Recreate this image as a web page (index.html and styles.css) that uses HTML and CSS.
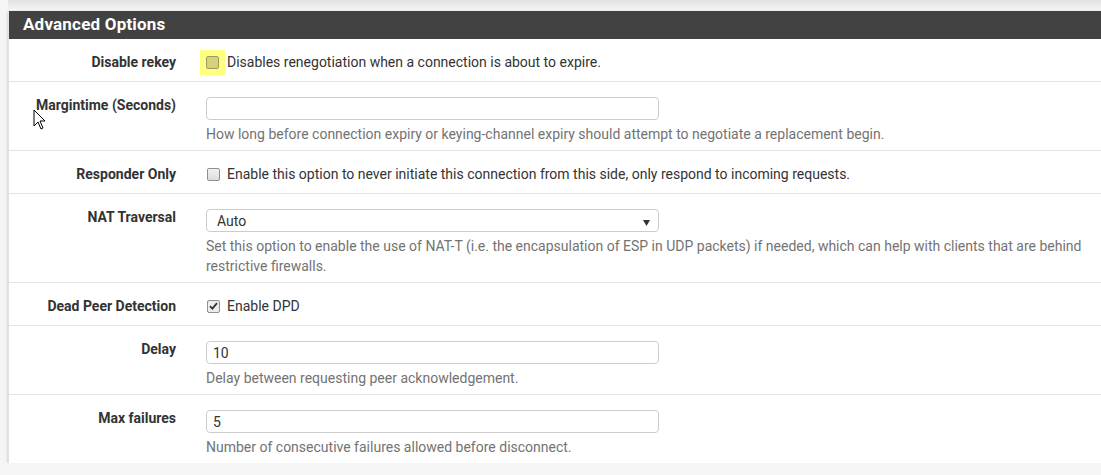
FILE: index.html
```html
<!DOCTYPE html>
<html lang="en">
<head>
    <meta charset="UTF-8">
    <title>Advanced Options</title>
    <link rel="stylesheet" href="styles.css">
</head>
<body>
<div class="prev-panel"></div>

<div class="panel">
    <h2 class="panel-title">Advanced Options</h2>

    <div class="panel-body">

        <!-- Disable rekey -->
        <div class="form-row">
            <label class="row-label">Disable rekey</label>
            <div class="row-control">
                <label class="check">
                    <span class="highlight"><span class="check-box marked"></span></span>
                    Disables renegotiation when a connection is about to expire.
                </label>
            </div>
        </div>

        <!-- Margintime -->
        <div class="form-row">
            <svg class="cursor" width="13" height="21" viewBox="0 0 13 21">
                <path d="M1 1 L1 17 L5 13 L8 20 L10 19 L7 12 L12 12 Z" fill="#fff" stroke="#000" stroke-width="1"/>
            </svg>
            <label class="row-label left">Margintime (Seconds)</label>
            <div class="row-control">
                <input type="text" class="text-input">
                <p class="help">How long before connection expiry or keying-channel expiry should attempt to negotiate a replacement begin.</p>
            </div>
        </div>

        <!-- Responder only -->
        <div class="form-row">
            <label class="row-label">Responder Only</label>
            <div class="row-control">
                <label class="check">
                    <span class="check-box"></span>
                    Enable this option to never initiate this connection from this side, only respond to incoming requests.
                </label>
            </div>
        </div>

        <!-- NAT traversal -->
        <div class="form-row">
            <label class="row-label">NAT Traversal</label>
            <div class="row-control">
                <div class="select-wrap">
                    <select class="text-input select">
                        <option>Auto</option>
                        <option>Force</option>
                    </select>
                    <svg class="caret" width="7" height="6" viewBox="0 0 7 6"><path d="M0 0 H7 L3.5 6 Z" fill="#333"/></svg>
                </div>
                <p class="help">Set this option to enable the use of NAT-T (i.e. the encapsulation of ESP in UDP packets) if needed, which can help with clients that are behind restrictive firewalls.</p>
            </div>
        </div>

        <!-- DPD -->
        <div class="form-row">
            <label class="row-label">Dead Peer Detection</label>
            <div class="row-control">
                <label class="check">
                    <span class="check-box checked">
                        <svg width="9" height="8" viewBox="0 0 9 8"><path d="M1 4.2 L3.4 6.6 L8 1.2" fill="none" stroke="#333" stroke-width="1.8"/></svg>
                    </span>
                    Enable DPD
                </label>
            </div>
        </div>

        <!-- Delay -->
        <div class="form-row">
            <label class="row-label">Delay</label>
            <div class="row-control">
                <input type="text" class="text-input" value="10">
                <p class="help">Delay between requesting peer acknowledgement.</p>
            </div>
        </div>

        <!-- Max failures -->
        <div class="form-row last">
            <label class="row-label">Max failures</label>
            <div class="row-control">
                <input type="text" class="text-input" value="5">
                <p class="help">Number of consecutive failures allowed before disconnect.</p>
            </div>
        </div>

    </div>
</div>
</body>
</html>
```

FILE: styles.css
```css
body {
    margin: 0;
    background-color: #f5f5f5;
    font-family: Roboto, "Noto Sans", sans-serif;
    font-size: 14px;
    color: #333;
    overflow: hidden;
}

.prev-panel {
    height: 9px;
    margin-left: 8px;
    background: linear-gradient(#e3e3e3, #f1f1f1);
}

.panel {
    margin: 2px -20px 0 8px;
    background-color: #fff;
    box-shadow: 0 1px 3px rgba(0, 0, 0, 0.22);
    border-left: 1px solid #e2e2e2;
}

.panel-title {
    margin: 0;
    height: 28px;
    line-height: 27px;
    padding-left: 14px;
    background-color: #424242;
    color: #fff;
    font-size: 17px;
    font-weight: bold;
    letter-spacing: 0.2px;
}

.form-row {
    position: relative;
    display: grid;
    grid-template-columns: 167px 1fr;
    column-gap: 30px;
    padding: 13px 0 6px;
    border-bottom: 1px solid #e3e3e3;
}
.form-row.last {
    border-bottom: none;
}

.row-label {
    text-align: right;
    font-weight: bold;
    line-height: 20px;
    height: 20px;
}
.row-label.left {
    text-align: left;
    padding-left: 27px;
}

.row-control {
    min-width: 0;
}

.text-input {
    display: block;
    box-sizing: border-box;
    width: 453px;
    height: 23px;
    margin-top: 2px;
    padding: 0 6px;
    border: 1px solid #ccc;
    border-radius: 4px;
    font-family: Roboto, "Noto Sans", sans-serif;
    font-size: 14px;
    color: #333;
    background-color: #fff;
}

.select-wrap {
    position: relative;
    width: 453px;
}
.select {
    appearance: none;
    -webkit-appearance: none;
    padding: 0 10px;
}
.caret {
    position: absolute;
    right: 9px;
    top: 11px;
}

.help {
    margin: 4px 0 0;
    line-height: 20px;
    font-size: 14px;
    color: #737373;
}

.check {
    display: flex;
    align-items: center;
    height: 20px;
    line-height: 20px;
    margin-bottom: 3px;
}
.check-box {
    box-sizing: border-box;
    display: flex;
    align-items: center;
    justify-content: center;
    width: 13px;
    height: 13px;
    margin: 0 7px 0 1px;
    border: 1px solid #8f8f8f;
    border-radius: 2px;
    background: linear-gradient(#f2f2f2, #dcdcdc);
}
.highlight {
    display: flex;
    padding: 6px;
    margin: -6px 2px -6px -6px;
    background-color: #ffff80;
}
.check-box.marked {
    margin: 0;
    background: #d5d37a;
    border-color: #9b9a66;
}
.check-box.checked {
    background: #ececec;
}

.cursor {
    position: absolute;
    left: 24px;
    top: 27px;
}
```
